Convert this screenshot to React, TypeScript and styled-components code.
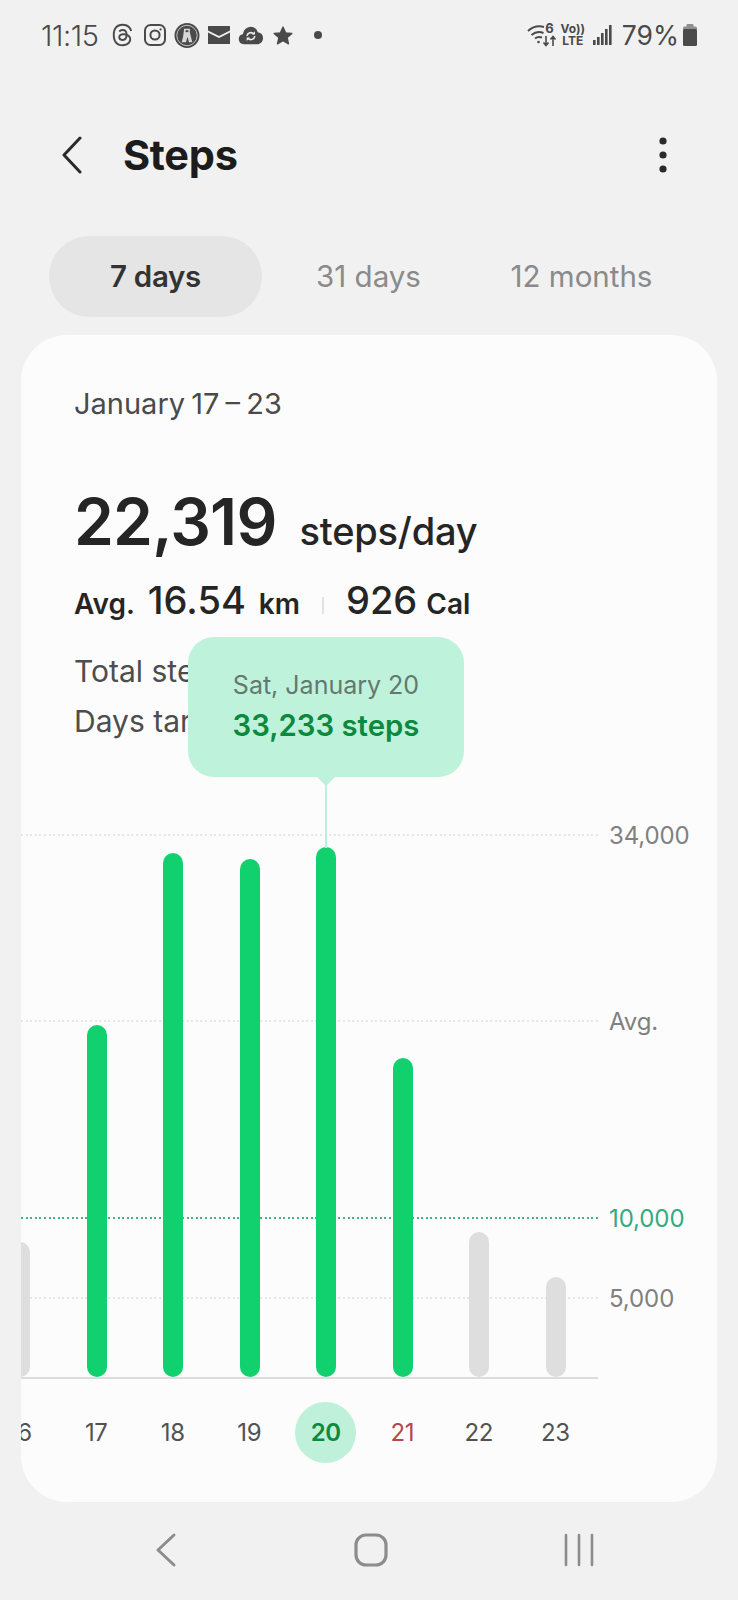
import React from "react";
import styled, { createGlobalStyle } from "styled-components";
import { FaThreads } from "react-icons/fa6";

const Global = createGlobalStyle`
  html, body { margin: 0; padding: 0; background: #f1f1f1; }
  body { font-family: Inter, "Noto Sans", "Liberation Sans", sans-serif; }
  * { box-sizing: border-box; }
`;

const Page = styled.div`
  width: 738px;
  height: 1600px;
  background: #f1f1f1;
  display: flex;
  flex-direction: column;
  overflow: hidden;
`;

const StatusBar = styled.div`
  height: 70px;
  padding: 0 41px 0 41px;
  display: flex;
  align-items: center;
  justify-content: space-between;
  color: #4a4a4a;
`;
const StatusGroup = styled.div`
  display: flex;
  align-items: center;
`;
const Clock = styled.span`
  font-size: 29px;
  font-weight: 300;
  letter-spacing: -0.4px;
  width: 71px;
`;
const Slot = styled.span<{ $w: number; $mr?: number }>`
  display: flex;
  align-items: center;
  justify-content: center;
  width: ${(p) => p.$w}px;
  margin-right: ${(p) => p.$mr ?? 0}px;
`;
const Battery = styled.span`
  font-size: 26.5px;
  margin-right: 4px;
`;
const VoLte = styled.span`
  display: flex;
  flex-direction: column;
  align-items: center;
  font-size: 12px;
  line-height: 12px;
  font-weight: 700;
  color: #4a4a4a;
`;
const WifiWrap = styled.span`
  position: relative;
  display: flex;
  width: 30px;
  height: 26px;
`;
const WifiSix = styled.span`
  position: absolute;
  right: 3px;
  top: -2px;
  font-size: 13px;
  font-weight: 700;
`;

const Header = styled.div`
  height: 166px;
  padding: 4px 71px 0 59px;
  display: flex;
  align-items: center;
`;
const Title = styled.h1`
  margin: 0 0 0 40px;
  font-size: 41.5px;
  font-weight: 700;
  letter-spacing: -0.3px;
  color: #1c1c1c;
  flex: 1;
`;

const Tabs = styled.div`
  display: flex;
  padding-left: 49px;
  margin-bottom: 18px;
`;
const Tab = styled.div<{ $active?: boolean }>`
  width: 213px;
  height: 81px;
  padding-bottom: 2px;
  border-radius: 41px;
  display: flex;
  align-items: center;
  justify-content: center;
  font-size: 29.5px;
  font-weight: ${(p) => (p.$active ? 600 : 400)};
  letter-spacing: ${(p) => (p.$active ? "-0.3px" : "0")};
  color: ${(p) => (p.$active ? "#333333" : "#8a8a8a")};
  background: ${(p) => (p.$active ? "#e5e5e5" : "transparent")};
`;

const Card = styled.div`
  position: relative;
  margin: 0 21px;
  height: 1167px;
  background: #fcfcfc;
  border-radius: 46px;
  overflow: hidden;
`;
const Summary = styled.div`
  height: 466px;
  padding: 51px 0 0 53px;
`;
const Range = styled.div`
  font-size: 29px;
  line-height: 36px;
  word-spacing: -2px;
  color: #4a4a4a;
`;
const Headline = styled.div`
  margin-top: 60px;
  display: flex;
  align-items: baseline;
  color: #252525;
  height: 80px;
`;
const Big = styled.span`
  font-size: 64px;
  font-weight: 600;
  line-height: 80px;
  letter-spacing: -0.8px;
`;
const Unit = styled.span`
  margin-left: 23px;
  font-size: 38px;
  font-weight: 500;
  letter-spacing: -0.2px;
`;
const Averages = styled.div`
  margin-top: 15px;
  height: 48px;
  display: flex;
  align-items: baseline;
  color: #252525;
`;
const AvgLabel = styled.span<{ $ml?: number }>`
  font-size: 28px;
  font-weight: 600;
  margin-left: ${(p) => p.$ml ?? 0}px;
`;
const AvgValue = styled.span<{ $ml?: number }>`
  font-size: 38px;
  font-weight: 500;
  margin-left: ${(p) => p.$ml ?? 0}px;
`;
const Divider = styled.span`
  width: 2px;
  height: 17px;
  margin: 0 22px;
  background: #e2e2e2;
`;
const Detail = styled.div<{ $mt: number }>`
  margin-top: ${(p) => p.$mt}px;
  font-size: 30px;
  line-height: 36px;
  color: #4d4d4d;
`;

const Tooltip = styled.div`
  position: absolute;
  left: 167px;
  top: 302px;
  width: 276px;
  height: 140px;
  padding-bottom: 3px;
  border-radius: 26px;
  background: #bff2db;
  display: flex;
  flex-direction: column;
  align-items: center;
  justify-content: center;
  gap: 8px;
  z-index: 3;
  &::before {
    content: "";
    position: absolute;
    left: 129px;
    top: 140px;
    width: 18px;
    height: 9px;
    background: #bff2db;
    clip-path: polygon(0 0, 100% 0, 50% 100%);
  }
  &::after {
    content: "";
    position: absolute;
    left: 137px;
    top: 140px;
    width: 2px;
    height: 71px;
    background: #bfeedd;
  }
`;
const TipDate = styled.div`
  font-size: 25px;
  line-height: 32px;
  color: #64786f;
`;
const TipValue = styled.div`
  font-size: 29.3px;
  line-height: 34px;
  font-weight: 600;
  color: #0b8a3f;
`;

const Chart = styled.div`
  position: relative;
  height: 578px;
  width: 577px;
  border-bottom: 2px solid #dcdcdc;
`;
const GridLine = styled.div<{ $bottom: number; $green?: boolean }>`
  position: absolute;
  left: 0;
  right: 0;
  bottom: ${(p) => p.$bottom}px;
  height: 2px;
  background: repeating-linear-gradient(
    90deg,
    ${(p) => (p.$green ? "#3fb587" : "#e6e6e6")} 0 2px,
    transparent 2px 4.6px
  );
`;
const AxisLabel = styled.div<{ $bottom: number; $green?: boolean }>`
  position: absolute;
  left: 588px;
  bottom: ${(p) => p.$bottom - 16}px;
  line-height: 32px;
  font-size: 24px;
  letter-spacing: -0.1px;
  white-space: nowrap;
  color: ${(p) => (p.$green ? "#33ab7e" : "#808080")};
`;
const Bars = styled.div`
  position: absolute;
  left: -39px;
  bottom: 0;
  height: 100%;
  display: flex;
  align-items: flex-end;
`;
const BarCell = styled.div`
  width: 76.5px;
  display: flex;
  justify-content: center;
`;
const Bar = styled.div<{ $on?: boolean; $h: number }>`
  width: 20px;
  height: ${(p) => p.$h}px;
  border-radius: 10px;
  background: ${(p) => (p.$on ? "#11d16f" : "#dedede")};
`;
const Days = styled.div`
  margin: 22px 0 0 -39.5px;
  display: flex;
`;
const DayCell = styled.div`
  width: 76.5px;
  height: 62px;
  display: flex;
  align-items: center;
  justify-content: center;
`;
const DayLabel = styled.span<{ $tone?: "red" | "sel" }>`
  width: 61px;
  height: 61px;
  border-radius: 50%;
  display: flex;
  align-items: center;
  justify-content: center;
  font-size: 24px;
  letter-spacing: -0.4px;
  font-weight: ${(p) => (p.$tone === "sel" ? 600 : 400)};
  color: ${(p) => (p.$tone === "red" ? "#b3474d" : p.$tone === "sel" ? "#0b8a3f" : "#525252")};
  background: ${(p) => (p.$tone === "sel" ? "#bff0da" : "transparent")};
`;

const NavBar = styled.div`
  flex: 1;
  display: flex;
  padding: 30px 0 0 155px;
  align-items: flex-start;
`;
const NavHome = styled.span`
  display: flex;
  margin-left: 176px;
`;
const NavRecent = styled.span`
  display: flex;
  margin-left: 174px;
`;

const days: { d: string; h: number; on?: boolean; tone?: "red" | "sel" }[] = [
  { d: "16", h: 135 },
  { d: "17", h: 352, on: true },
  { d: "18", h: 524, on: true },
  { d: "19", h: 518, on: true },
  { d: "20", h: 530, on: true, tone: "sel" },
  { d: "21", h: 319, on: true, tone: "red" },
  { d: "22", h: 145 },
  { d: "23", h: 100 },
];
const lines: { l: string; b: number; g?: boolean }[] = [
  { l: "34,000", b: 541 },
  { l: "Avg.", b: 355 },
  { l: "10,000", b: 158, g: true },
  { l: "5,000", b: 78 },
];

const I = "#4a4a4a";

export default function App() {
  return (
    <Page>
      <Global />
      <StatusBar>
        <StatusGroup>
          <Clock>11:15</Clock>
          <Slot $w={21} $mr={11}><FaThreads size={24} color={I} /></Slot>
          <Slot $w={22} $mr={8}>
            <svg width="22" height="22" viewBox="0 0 22 22" fill="none" stroke={I} strokeWidth="2">
              <rect x="1" y="1" width="20" height="20" rx="5.5" />
              <circle cx="11" cy="11" r="4.6" />
              <circle cx="16.6" cy="5.4" r="1.1" fill={I} stroke="none" />
            </svg>
          </Slot>
          <Slot $w={26} $mr={8}>
            <svg width="27" height="27" viewBox="0 0 27 27">
              <circle cx="13.5" cy="13.5" r="13" fill={I} />
              <circle cx="13.5" cy="13.5" r="10.6" fill="none" stroke="#e8e8e8" strokeWidth="0.8" />
              <path d="M10.5 6.5h6v4l1 4 1.5 6h-3.500l-1.200-5h-.6l-1.200 5H8l1.500-6z" fill="#d8d8d8" />
              <rect x="12" y="8" width="3" height="2" fill={I} />
            </svg>
          </Slot>
          <Slot $w={22} $mr={8}>
            <svg width="22" height="18" viewBox="0 0 22 18">
              <path d="M0 0h22v4.500L11 10 0 4.500z" fill={I} />
              <path d="M0 6.600 11 12 22 6.600V18H0z" fill={I} />
            </svg>
          </Slot>
          <Slot $w={26} $mr={9}>
            <svg width="27" height="20" viewBox="0 0 27 20">
              <path d="M6 19.500a5.200 5.200 0 0 1-1-10.300A8.600 8.600 0 0 1 13 1.500a8 8 0 0 1 7.600 5.600 6.300 6.300 0 0 1 .4 12.400z" fill={I} />
              <path d="M9.400 11a4 4 0 0 1 7-2M17.400 11a4 4 0 0 1-7 2.400" fill="none" stroke="#efefef" strokeWidth="1.600" />
              <path d="M17.600 6v3.500h-3.400zM9 16.200v-3.500h3.400z" fill="#efefef" />
            </svg>
          </Slot>
          <Slot $w={20} $mr={21}>
            <svg width="20" height="19" viewBox="0 0 24 23">
              <path d="M12 1.200l3.200 7 7.600.8-5.700 5.100 1.600 7.500L12 17.800l-6.700 3.800 1.600-7.500L1.200 9l7.600-.8z" fill={I} stroke={I} strokeWidth="1.500" strokeLinejoin="round" />
            </svg>
          </Slot>
          <Slot $w={8}>
            <svg width="8" height="8" viewBox="0 0 8 8"><circle cx="4" cy="4" r="4" fill={I} /></svg>
          </Slot>
        </StatusGroup>
        <StatusGroup>
          <Slot $w={30} $mr={5}>
            <WifiWrap>
              <svg width="30" height="26" viewBox="0 0 30 26" fill="none" stroke={I} strokeWidth="2">
                <path d="M1 9C6 4.500 12 3.500 17 5" />
                <path d="M4.500 13c3.500-3 8-3.600 12-2" />
                <path d="M8 16.500c2-1.600 4.500-1.800 7-1" />
                <circle cx="11.500" cy="20" r="1.300" fill={I} stroke="none" />
                <path d="M19 14v9M16.500 20.500l2.500 3 2.500-3M26 24v-9M23.500 17.500l2.500-3 2.500 3" strokeWidth="1.600" />
              </svg>
              <WifiSix>6</WifiSix>
            </WifiWrap>
          </Slot>
          <Slot $w={22} $mr={9}>
            <VoLte><span>Vo))</span><span>LTE</span></VoLte>
          </Slot>
          <Slot $w={19} $mr={10}>
            <svg width="19" height="20" viewBox="0 0 19 20" fill={I}>
              <rect x="0" y="15" width="2.600" height="5" />
              <rect x="4" y="12" width="2.600" height="8" />
              <rect x="8" y="8" width="2.600" height="12" />
              <rect x="12" y="4" width="2.600" height="16" />
              <rect x="16" y="0" width="2.600" height="20" />
            </svg>
          </Slot>
          <Battery>79%</Battery>
          <Slot $w={14}>
            <svg width="14" height="22" viewBox="0 0 14 22">
              <rect x="3.500" y="0" width="7" height="4" rx="1" fill="#8f8f8f" />
              <rect x="0" y="2.500" width="14" height="4" rx="1.500" fill="#8f8f8f" />
              <rect x="0" y="5" width="14" height="17" rx="1.500" fill={I} />
            </svg>
          </Slot>
        </StatusGroup>
      </StatusBar>

      <Header>
        <svg width="24" height="38" viewBox="0 0 24 38" fill="none" stroke="#2a2a2a" strokeWidth="3" strokeLinecap="round" strokeLinejoin="round">
          <path d="M21 2 5 19l16 17" />
        </svg>
        <Title>Steps</Title>
        <svg width="8" height="36" viewBox="0 0 8 36" fill="#2a2a2a">
          <circle cx="4" cy="4" r="3.600" />
          <circle cx="4" cy="18" r="3.600" />
          <circle cx="4" cy="32" r="3.600" />
        </svg>
      </Header>

      <Tabs>
        <Tab $active>7 days</Tab>
        <Tab>31 days</Tab>
        <Tab>12 months</Tab>
      </Tabs>

      <Card>
        <Summary>
          <Range>January 17 – 23</Range>
          <Headline>
            <Big>22,319</Big>
            <Unit>steps/day</Unit>
          </Headline>
          <Averages>
            <AvgLabel>Avg.</AvgLabel>
            <AvgValue $ml={13}>16.54</AvgValue>
            <AvgLabel $ml={13}>km</AvgLabel>
            <Divider />
            <AvgValue>926</AvgValue>
            <AvgLabel $ml={9}>Cal</AvgLabel>
          </Averages>
          <Detail $mt={28}>Total steps</Detail>
          <Detail $mt={14}>Days target</Detail>
        </Summary>

        <Tooltip>
          <TipDate>Sat, January 20</TipDate>
          <TipValue>33,233 steps</TipValue>
        </Tooltip>

        <Chart>
          {lines.map((x) => (
            <React.Fragment key={x.l}>
              <GridLine $bottom={x.b} $green={x.g} />
              <AxisLabel $bottom={x.b} $green={x.g}>{x.l}</AxisLabel>
            </React.Fragment>
          ))}
          <Bars>
            {days.map((x) => (
              <BarCell key={x.d}>
                <Bar $h={x.h} $on={x.on} />
              </BarCell>
            ))}
          </Bars>
        </Chart>
        <Days>
          {days.map((x) => (
            <DayCell key={x.d}>
              <DayLabel $tone={x.tone}>{x.d}</DayLabel>
            </DayCell>
          ))}
        </Days>
      </Card>

      <NavBar>
        <svg width="22" height="36" viewBox="0 0 22 36" fill="none" stroke="#8c8c8c" strokeWidth="3" strokeLinecap="round" strokeLinejoin="round">
          <path d="M19 3 3 18l16 15" />
        </svg>
        <NavHome>
          <svg width="36" height="36" viewBox="0 0 36 36" fill="none" stroke="#8c8c8c" strokeWidth="3.200">
            <rect x="3" y="3" width="30" height="30" rx="10" />
          </svg>
        </NavHome>
        <NavRecent>
          <svg width="32" height="36" viewBox="0 0 32 36" fill="none" stroke="#8c8c8c" strokeWidth="2.600" strokeLinecap="round">
            <path d="M3 3v30M16 3v30M29 3v30" />
          </svg>
        </NavRecent>
      </NavBar>
    </Page>
  );
}
